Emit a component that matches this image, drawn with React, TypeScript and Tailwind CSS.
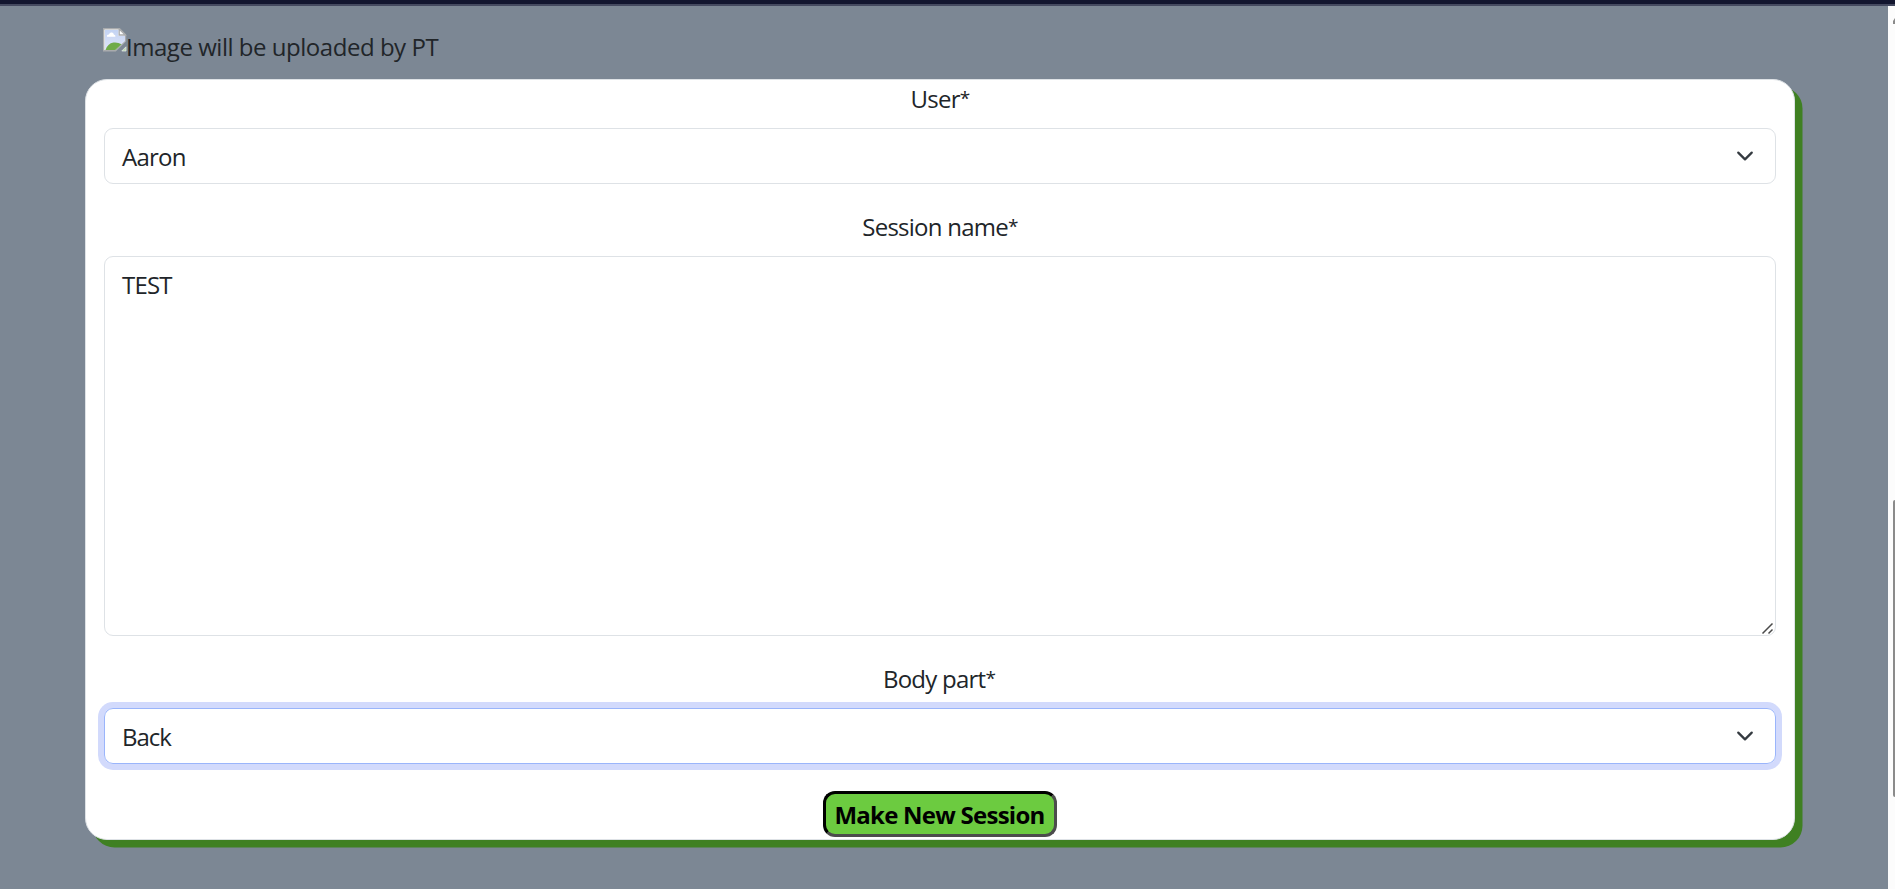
import type { ReactNode } from 'react';

function BrokenImage() {
  return (
    <svg width="24" height="24" viewBox="0 0 24 24" className="block shrink-0">
      <defs>
        <linearGradient id="sky" x1="0" y1="0" x2="0" y2="1">
          <stop offset="0" stopColor="#c3d3f3" />
          <stop offset="1" stopColor="#dfe4f8" />
        </linearGradient>
      </defs>
      <path d="M.7 .7H16.500L22.500 6.700V13L12.500 22.800H.7z" fill="#fff" stroke="#a9abad" strokeWidth="1.400" />
      <path d="M2 2H15.500V8H22V13L12 22H2z" fill="url(#sky)" />
      <path d="M4 8.800Q3.600 6.600 6 6.500Q6.800 4 8.800 4.500Q10.600 4.700 10.800 6.500Q12.800 6.800 12.400 8.800z" fill="#fff" />
      <path d="M2.500 22Q4.500 15.500 10.500 14.500Q15 14 18.500 16.200L12.300 22z" fill="#70ab48" />
      <path d="M16.200 1V7H22.300z" fill="#fff" stroke="#a9abad" strokeWidth="1.300" />
      <path d="M23 18.800V23H18.800z" fill="#bcd9ac" stroke="#e1e7e4" strokeWidth=".8" />
    </svg>
  );
}

function Chevron() {
  return (
    <svg width="18" height="18" viewBox="0 0 16 16" className="shrink-0">
      <path d="m2 5 6 6 6-6" fill="none" stroke="#343a40" strokeWidth="2" strokeLinecap="round" strokeLinejoin="round" />
    </svg>
  );
}

function Label({ children }: { children: ReactNode }) {
  return (
    <div className="h-9 text-center tracking-[-0.75px]">
      {children}
      <span className="align-[3px] text-[19px] leading-none">*</span>
    </div>
  );
}

export default function App() {
  return (
    <div className="flex h-[889px] w-full flex-col overflow-hidden bg-[#7c8794] font-['Open_Sans','Noto_Sans',sans-serif] text-[24px] leading-9 text-[#212529]">
      <div className="h-1.5 shrink-0 border-b-2 border-[#454a60] bg-[#13162f]" />
      <div className="flex min-h-0 flex-1">
        <main className="flex-1 pr-[93px] pl-[85px]">
          <div className="flex h-[73px] items-start pt-[22px] pl-[18px]">
            <BrokenImage />
            <span className="mt-px -ml-px tracking-[-0.47px] whitespace-nowrap">Image will be uploaded by PT</span>
          </div>
          <form className="flex h-[761px] flex-col rounded-[22px] border border-[#dee2e6] bg-white px-[18px] shadow-[7.5px_7.5px_0_#3f8022]">
            <div className="pt-px">
              <Label>User</Label>
            </div>
            <div className="mt-[11px] flex h-14 shrink-0 items-center justify-between rounded-[9px] border border-[#dee2e6] pr-[21px] pl-[17px]">
              <span className="pt-0.5 tracking-[-0.75px]">Aaron</span>
              <Chevron />
            </div>
            <div className="mt-[25px]">
              <Label>Session name</Label>
            </div>
            <div className="relative mt-[11px] h-[380px] shrink-0">
              <textarea
                defaultValue="TEST"
                className="block h-full w-full resize-none rounded-[9px] border border-[#dee2e6] px-[17px] py-[10px] tracking-[-0.8px] outline-none"
              />
              <svg width="13" height="13" viewBox="0 0 13 13" className="absolute right-0.5 bottom-px">
                <path d="M1.500 11.500L11.500 1.500M7.500 11.500L11.500 7.500" fill="none" stroke="#4a4a4a" strokeWidth="1.500" />
              </svg>
            </div>
            <div className="mt-[25px] pr-0.5">
              <Label>Body part</Label>
            </div>
            <div className="mt-[11px] flex h-14 shrink-0 items-center justify-between rounded-[9px] border border-[#9ab5fb] pr-[21px] pl-[17px] shadow-[0_0_0_6px_#d2dafc]">
              <span className="pt-0.5 tracking-[-1px]">Back</span>
              <Chevron />
            </div>
            <button
              type="button"
              className="mt-[27px] flex h-[46px] w-[234px] items-center justify-center self-center rounded-xl border-3 border-t-black border-r-[#4c4c4c] border-b-[#4c4c4c] border-l-black bg-[#6ccb40] pt-0.5 pr-px font-bold tracking-[-0.75px] whitespace-nowrap text-black"
            >
              Make New Session
            </button>
          </form>
        </main>
        <div className="flex w-[7px] flex-col items-end bg-[#fcfcfc] pt-3">
          <svg width="2" height="6" viewBox="0 0 2 6">
            <path d="M2 0L0 3v3h2z" fill="#8b8b8b" />
          </svg>
          <div className="mt-[476px] h-[297px] w-0.5 rounded-l-sm bg-[#8b8b8b]" />
        </div>
      </div>
    </div>
  );
}
